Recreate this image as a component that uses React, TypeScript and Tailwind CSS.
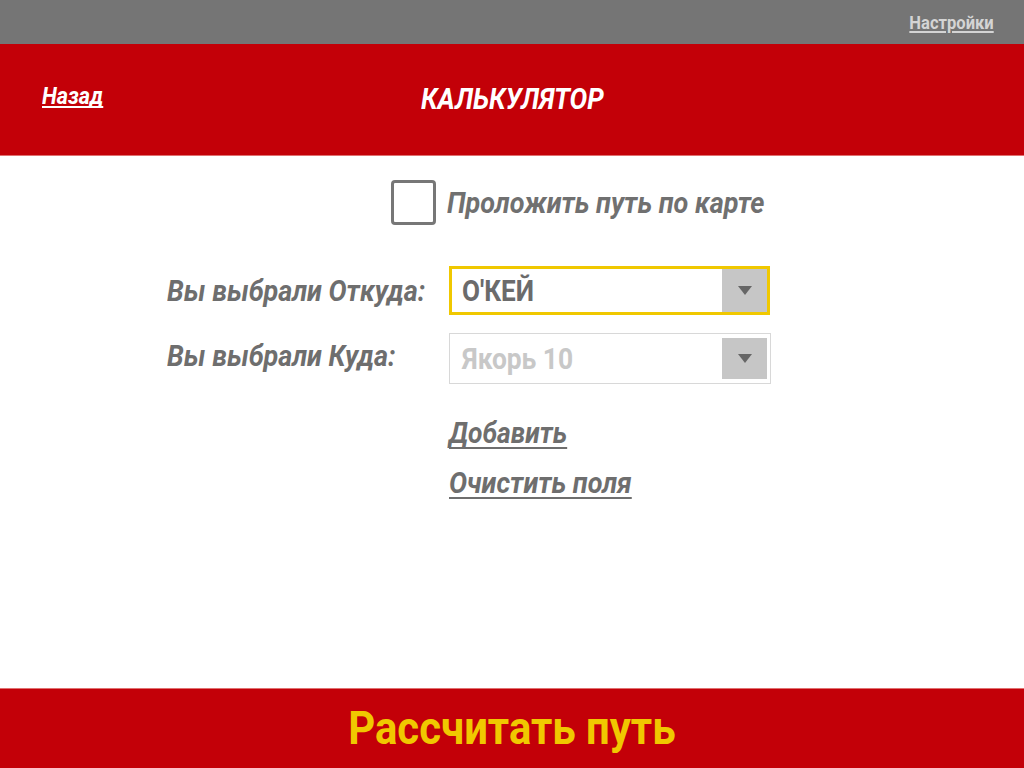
import React, { useState } from 'react';

const font = { fontFamily: 'Roboto, "Liberation Sans", sans-serif' };

function Arrow() {
  return (
    <div className="flex h-full w-[45px] items-center justify-center bg-[#c6c6c6]">
      <svg width="14" height="9" viewBox="0 0 14 9">
        <path d="M0 0 L14 0 L7 9 Z" fill="#666666" />
      </svg>
    </div>
  );
}

function App() {
  const [checked, setChecked] = useState(false);

  return (
    <div className="flex h-[768px] w-[1024px] flex-col overflow-hidden bg-white" style={font}>
      <div className="flex h-[44px] items-center justify-end bg-[#757575] pr-[30px]">
        <a className="inline-block origin-right scale-x-[0.92] text-[18px] font-bold text-[#d4d4d4] underline decoration-2 underline-offset-2">
          Настройки
        </a>
      </div>

      <div className="relative flex h-[112px] items-center justify-center border-b border-[#e07070] bg-[#c30008]">
        <a className="absolute left-[42px] top-[36px] inline-block origin-left scale-x-[0.94] text-[23px] font-bold italic text-white underline decoration-2 underline-offset-2 [text-decoration-skip-ink:none]">
          Назад
        </a>
        <h1 className="inline-block scale-x-[0.91] text-[29px] font-bold italic text-white">КАЛЬКУЛЯТОР</h1>
      </div>

      <div className="flex flex-1 flex-col">
        <label className="ml-[391px] mt-[24px] flex items-center gap-[11px]">
          <span
            onClick={() => setChecked(!checked)}
            className="h-[45px] w-[45px] shrink-0 rounded-[4px] border-[3px] border-[#777777] bg-white"
          />
          <span className="inline-block origin-left scale-x-[0.9] whitespace-nowrap text-[30px] font-bold italic text-[#707070]">
            Проложить путь по карте
          </span>
        </label>

        <div className="mt-[41px] flex items-center">
          <div className="w-[449px] pl-[167px] text-[30px] font-bold italic text-[#6e6e6e]">
            <span className="inline-block origin-left scale-x-[0.9] whitespace-nowrap">Вы выбрали Откуда:</span>
          </div>
          <div className="flex h-[49px] w-[321px] items-stretch border-[3px] border-[#f0c800] bg-white">
            <div className="flex flex-1 items-center pl-[10px] text-[30px] font-bold text-[#6b6b6b]">
              <span className="inline-block origin-left scale-x-[0.87]">О'КЕЙ</span>
            </div>
            <Arrow />
          </div>
        </div>

        <div className="mt-[18px] flex items-center">
          <div className="w-[449px] pb-[6px] pl-[167px] text-[30px] font-bold italic text-[#6e6e6e]">
            <span className="inline-block origin-left scale-x-[0.9] whitespace-nowrap">Вы выбрали Куда:</span>
          </div>
          <div className="flex h-[51px] w-[322px] items-stretch border border-[#d8d8d8] bg-white py-[4px] pr-[3px]">
            <div className="flex flex-1 items-center pl-[12px] text-[30px] font-bold text-[#c8c8c8]">
              <span className="inline-block origin-left scale-x-[0.88]">Якорь 10</span>
            </div>
            <Arrow />
          </div>
        </div>

        <div className="ml-[449px] mt-[34px] flex flex-col items-start gap-[20px] text-[30px] font-bold italic leading-none text-[#6e6e6e]">
          <a className="inline-block origin-left scale-x-[0.88] underline decoration-2 underline-offset-4 [text-decoration-skip-ink:none]">
            Добавить
          </a>
          <a className="inline-block origin-left scale-x-[0.9] underline decoration-2 underline-offset-4 [text-decoration-skip-ink:none]">
            Очистить поля
          </a>
        </div>
      </div>

      <button className="flex h-[80px] shrink-0 items-center justify-center border-t border-[#e07070] bg-[#c30008] text-[46px] font-bold text-[#f0c800]">
        <span className="inline-block scale-x-[0.91]">Рассчитать путь</span>
      </button>
    </div>
  );
}

export default App;
